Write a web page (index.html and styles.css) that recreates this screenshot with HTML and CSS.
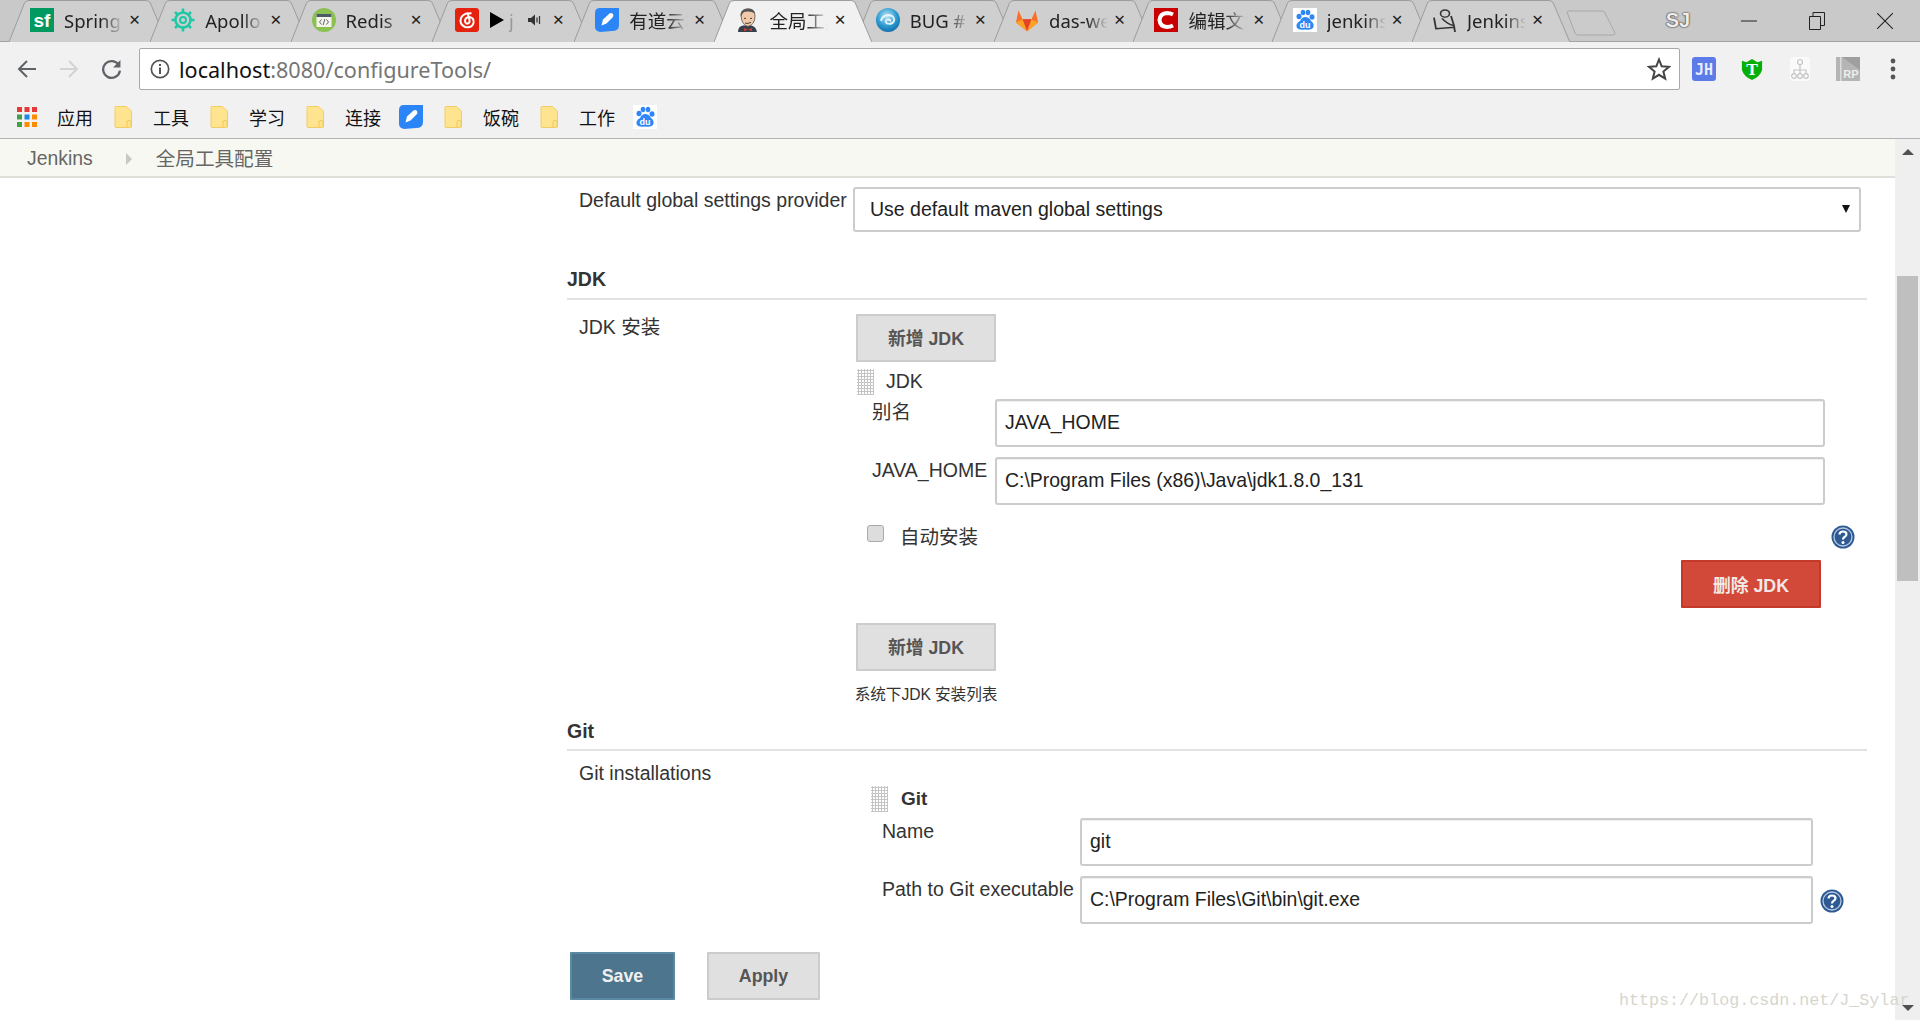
FILE: index.html
```html
<!DOCTYPE html>
<html lang="zh">
<head>
<meta charset="utf-8">
<title>全局工具配置 [Jenkins]</title>
<link rel="stylesheet" href="styles.css">
</head>
<body>
<svg class="defs" width="0" height="0" aria-hidden="true">
  <defs>
    <symbol id="tabshape" viewBox="0 0 160.5 42"><path d="M0 42 L15.5 3 Q16.7 .5 20 .5 L137 .5 Q140.5 .5 141.5 3 L158 42" /></symbol>
    <symbol id="folder" viewBox="0 0 18 22"><path d="M1 1.5 Q1 .5 2 .5 H12 L17.5 5 V20.5 Q17.5 21.5 16.5 21.5 H2 Q1 21.5 1 20.5Z" fill="#ffe48f" stroke="#f2cd62"/><path d="M13 21 V16 Q13 14.5 15 14.5 Q17 14.5 17 16 V21" fill="none" stroke="#eec65a"/></symbol>
    <symbol id="youdao" viewBox="0 0 24 24"><path d="M5 0 H24 V17 Q24 23 17 23 L5 24 Q0 23 0 19 V5 Q0 0 5 0Z" fill="#2b85f7"/><path d="M6.500 17.500 L8 11.500 L14.500 5.500 Q16.500 4.500 18 6 Q19 8 17.500 9.500 L11.500 15.500Z" fill="#fff"/></symbol>
    <symbol id="baidu" viewBox="0 0 24 24"><rect width="24" height="24" fill="#fff"/><g fill="#2f86f5"><ellipse cx="6" cy="8.500" rx="2.500" ry="2.800"/><ellipse cx="10" cy="4.500" rx="2.300" ry="2.800"/><ellipse cx="15" cy="4.500" rx="2.300" ry="2.800"/><ellipse cx="19" cy="9" rx="2.500" ry="2.800"/><path d="M12 9 Q16 9 18 13 Q22 16 20 20 Q18 22.500 12 21.500 Q6 22.500 4 20 Q2 16 7 13 Q9 9 12 9Z"/></g><text x="12" y="20" class="du">du</text></symbol>
    <symbol id="help" viewBox="0 0 24 24"><circle cx="12" cy="12" r="11.500" fill="#2e5a94"/><circle cx="12" cy="12" r="9" fill="none" stroke="#b6c8e0" stroke-width="1.300"/><path d="M8.500 9.500 Q8.700 6.500 12 6.500 Q15.500 6.500 15.500 9.300 Q15.500 11 13.500 12 Q12 12.800 12 14.500" fill="none" stroke="#fff" stroke-width="2.200"/><circle cx="12" cy="17.500" r="1.500" fill="#fff"/></symbol>
  </defs>
</svg>

<div class="tabstrip">
  <div class="tab"><svg class="tabbg"><use href="#tabshape"/></svg><div class="tabrow">
    <svg class="fav" viewBox="0 0 24 24"><rect width="24" height="24" fill="#009a61"/><text x="12" y="19" class="sf">sf</text></svg>
    <span class="tabtitle">Spring</span><span class="tabx">✕</span></div></div>
  <div class="tab"><svg class="tabbg"><use href="#tabshape"/></svg><div class="tabrow">
    <svg class="fav" viewBox="0 0 24 24"><circle cx="12" cy="12" r="7.500" fill="none" stroke="#1ec8a5" stroke-width="2.500"/><circle cx="12" cy="12" r="3" fill="none" stroke="#1ec8a5" stroke-width="2"/><path d="M12 .5V4M12 20V23.500M.5 12H4M20 12H23.500M4 4L6.500 6.500M17.500 17.500L20 20M20 4L17.500 6.500M6.500 17.500L4 20" stroke="#1ec8a5" stroke-width="2.500"/></svg>
    <span class="tabtitle">Apollo</span><span class="tabx">✕</span></div></div>
  <div class="tab"><svg class="tabbg"><use href="#tabshape"/></svg><div class="tabrow">
    <svg class="fav" viewBox="0 0 24 24"><circle cx="12" cy="12" r="12" fill="#8cc152"/><rect x="4.500" y="6" width="15" height="13" fill="#f4f4ee"/><rect x="4.500" y="6" width="15" height="3" fill="#4a5a66"/><path d="M9.500 11.500L7.500 14L9.500 16.500M14.500 11.500L16.500 14L14.500 16.500M12.800 11L11.200 17" fill="none" stroke="#555" stroke-width=".9"/></svg>
    <span class="tabtitle">Redis</span><span class="tabx">✕</span></div></div>
  <div class="tab audio"><svg class="tabbg"><use href="#tabshape"/></svg><div class="tabrow">
    <svg class="fav" viewBox="0 0 24 24"><rect width="24" height="24" rx="3" fill="#e5220d"/><path d="M13.500 5 Q8 6 6 10 Q4 16 10 19 Q17 20.500 18.500 15 Q19.500 10 14.500 9 Q10 9.500 10 13 Q10.500 16 13 15.500 Q15 15 14.500 12 L13 6.500 Q14 4.500 16.500 5.500" fill="none" stroke="#fff" stroke-width="2"/></svg>
    <span class="media"></span><span class="tabtitle short">j</span><svg class="speaker" viewBox="0 0 14 14"><path d="M1 5H4L8 1.500V12.500L4 9H1Z" fill="#333"/><path d="M10 4.500V9.500M12.500 3V11" stroke="#333" stroke-width="1.200"/></svg><span class="tabx media-x">✕</span></div></div>
  <div class="tab"><svg class="tabbg"><use href="#tabshape"/></svg><div class="tabrow">
    <svg class="fav" viewBox="0 0 24 24"><use href="#youdao"/></svg>
    <span class="tabtitle">有道云笔记</span><span class="tabx">✕</span></div></div>
  <div class="tab active"><svg class="tabbg"><use href="#tabshape"/></svg><div class="tabrow">
    <svg class="fav" viewBox="0 0 24 30" preserveAspectRatio="none"><path d="M3 30 Q3 23 8 22 H16 Q21 23 22 30Z" fill="#35404a"/><path d="M6 10 Q6 1 13 1 Q20 1 20 10 Q20 21 13 23 Q7 22 6 10Z" fill="#f1c9a8" stroke="#444" stroke-width=".8"/><path d="M6 11 Q4 3 12 1 Q19 0 20 7 Q15 3 9 5 Q7 7 6 11Z" fill="#555"/><path d="M9 13H11M15 13H17M10 19Q13 20 16 18" stroke="#333" stroke-width="1" fill="none"/><path d="M9 25L13 27L17 25V29L13 27L9 29Z" fill="#d33833"/></svg>
    <span class="tabtitle">全局工具配置</span><span class="tabx">✕</span></div></div>
  <div class="tab"><svg class="tabbg"><use href="#tabshape"/></svg><div class="tabrow">
    <svg class="fav" viewBox="0 0 24 24"><defs><radialGradient id="ball" cx=".45" cy=".35" r=".75"><stop offset="0" stop-color="#bfe6f5"/><stop offset=".55" stop-color="#2a9bd0"/><stop offset="1" stop-color="#0d5e9c"/></radialGradient></defs><circle cx="12" cy="12" r="12" fill="url(#ball)"/><path d="M5 13 Q6 7 13 7 Q19 8 18 13 Q16 17 11 15.500 Q8 13 12 11.500 Q15 11.500 14 13.500" fill="none" stroke="#e4f5fb" stroke-width="1.800"/></svg>
    <span class="tabtitle">BUG #</span><span class="tabx">✕</span></div></div>
  <div class="tab"><svg class="tabbg"><use href="#tabshape"/></svg><div class="tabrow">
    <svg class="fav" viewBox="0 0 24 30" preserveAspectRatio="none"><path d="M12 29L1 18L3.500 3L7.500 14H16.500L20.500 3L23 18Z" fill="#fc6d26"/><path d="M12 29L7.500 14H16.500Z" fill="#e24329"/><path d="M1 18L7.500 14L12 29Z" fill="#fca326"/><path d="M23 18L16.500 14L12 29Z" fill="#fca326"/></svg>
    <span class="tabtitle">das-web</span><span class="tabx">✕</span></div></div>
  <div class="tab"><svg class="tabbg"><use href="#tabshape"/></svg><div class="tabrow">
    <svg class="fav" viewBox="0 0 24 24"><rect width="24" height="24" fill="#c90000"/><path d="M19 6.500 Q16 5 13 5 Q6 5.500 5.500 12 Q6 18.500 13 19 Q16 19 19 17.500" fill="none" stroke="#fff" stroke-width="4"/></svg>
    <span class="tabtitle">编辑文章</span><span class="tabx">✕</span></div></div>
  <div class="tab"><svg class="tabbg"><use href="#tabshape"/></svg><div class="tabrow">
    <svg class="fav" viewBox="0 0 24 24"><use href="#baidu"/></svg>
    <span class="tabtitle">jenkins</span><span class="tabx">✕</span></div></div>
  <div class="tab"><svg class="tabbg"><use href="#tabshape"/></svg><div class="tabrow">
    <svg class="fav" viewBox="0 0 24 30" preserveAspectRatio="none"><circle cx="12" cy="7" r="4.500" fill="none" stroke="#333" stroke-width="1.600"/><path d="M1 12 L3 26 L22 24 M9 13 Q14 20 21 22 L22 30 M18 10 L21 22" fill="none" stroke="#333" stroke-width="1.800"/></svg>
    <span class="tabtitle">Jenkins</span><span class="tabx">✕</span></div></div>
  <svg class="newtab" viewBox="0 0 50 26"><path d="M1 2 Q1 1 3 1 H36 Q38 1 39 3 L49 23 Q49 25 47 25 H12 Q10 25 9 23Z" fill="#cbcbcb" stroke="#a8a8a8"/></svg>
  <div class="winctl">
    <span class="sj">SJ</span>
    <span class="wbtn"><svg viewBox="0 0 16 16" width="16" height="16"><path d="M0 8H16" stroke="#222"/></svg></span>
    <span class="wbtn"><svg viewBox="0 0 16 18" width="16" height="18"><path d="M.5 4.500H11.500V17.500H.5ZM4 4V.5H15.500V13.500H12" fill="none" stroke="#222"/></svg></span>
    <span class="wbtn"><svg viewBox="0 0 16 16" width="16" height="16"><path d="M0 0L16 16M16 0L0 16" stroke="#222" stroke-width="1.100"/></svg></span>
  </div>
</div>

<div class="toolbar">
  <span class="nav"><svg viewBox="0 0 20 20" width="20" height="20"><path d="M19 10H2M10 2L2 10L10 18" fill="none" stroke="#5f6368" stroke-width="2"/></svg></span>
  <span class="nav"><svg viewBox="0 0 20 20" width="20" height="20"><path d="M1 10H18M10 2L18 10L10 18" fill="none" stroke="#d3d3d3" stroke-width="2"/></svg></span>
  <span class="nav"><svg viewBox="0 0 20 20" width="21" height="21"><path d="M17 6 A8 8 0 1 0 18 11" fill="none" stroke="#5f6368" stroke-width="2.200"/><path d="M18.500 1V8H11.500Z" fill="#5f6368"/></svg></span>
  <div class="omnibox">
    <svg class="info" viewBox="0 0 20 20" width="20" height="20"><circle cx="10" cy="10" r="8.700" fill="none" stroke="#555" stroke-width="1.700"/><rect x="9" y="8.500" width="2" height="6.500" fill="#555"/><rect x="9" y="5" width="2" height="2" fill="#555"/></svg>
    <span class="url"><span class="host">localhost</span>:8080/configureTools/</span>
    <svg class="star" viewBox="0 0 24 24" width="24" height="24"><path d="M12 2.500L14.700 9.300L22 9.800L16.400 14.500L18.200 21.700L12 17.800L5.800 21.700L7.600 14.500L2 9.800L9.300 9.300Z" fill="none" stroke="#444" stroke-width="2"/></svg>
  </div>
  <span class="ext"><svg viewBox="0 0 24 24" width="24" height="24"><rect width="24" height="24" rx="3" fill="#5b7be8"/><text x="12" y="18" class="jh">JH</text></svg></span>
  <span class="ext"><svg viewBox="0 0 24 24" width="22" height="24"><path d="M1 3L6 4.500L12 1L18 4.500L23 3V13Q21 20 12 24Q3 20 1 13Z" fill="#08ae08"/><text x="12" y="18" class="tt">T</text></svg></span>
  <span class="ext"><svg viewBox="0 0 20 24" width="20" height="24"><rect width="20" height="24" rx="4" fill="#fafafa"/><g fill="none" stroke="#c4c4c4" stroke-width="1.200"><circle cx="10" cy="5" r="2.500"/><circle cx="4" cy="19" r="2.300"/><circle cx="10" cy="19" r="2.300"/><circle cx="16" cy="19" r="2.300"/><path d="M10 8V16.500M4 16.500V13H16V16.500"/></g></svg></span>
  <span class="ext"><svg viewBox="0 0 24 24" width="24" height="24"><rect width="24" height="24" fill="#b5b5b5"/><rect x="4" width="1.500" height="24" fill="#ddd"/><path d="M6 0L24 13V0Z" fill="#9f9f9f"/><text x="15" y="21" class="rp">RP</text></svg></span>
  <span class="ext dots"><svg viewBox="0 0 8 22" width="8" height="22"><circle cx="4" cy="3" r="2.400" fill="#555"/><circle cx="4" cy="11" r="2.400" fill="#555"/><circle cx="4" cy="19" r="2.400" fill="#555"/></svg></span>
</div>

<div class="bookmarks">
  <svg class="apps" viewBox="0 0 20 20" width="20" height="20"><g><rect width="5" height="5" fill="#e53935"/><rect x="7.500" width="5" height="5" fill="#e53935"/><rect x="15" width="5" height="5" fill="#e53935"/><rect y="7.500" width="5" height="5" fill="#43a047"/><rect x="7.500" y="7.500" width="5" height="5" fill="#1e88e5"/><rect x="15" y="7.500" width="5" height="5" fill="#fb8c00"/><rect y="15" width="5" height="5" fill="#43a047"/><rect x="7.500" y="15" width="5" height="5" fill="#fb8c00"/><rect x="15" y="15" width="5" height="5" fill="#fb8c00"/></g></svg>
  <span class="bm">应用</span>
  <svg class="bmicon"><use href="#folder"/></svg><span class="bm">工具</span>
  <svg class="bmicon"><use href="#folder"/></svg><span class="bm">学习</span>
  <svg class="bmicon"><use href="#folder"/></svg><span class="bm">连接</span>
  <svg class="bmfav" viewBox="0 0 24 24"><use href="#youdao"/></svg>
  <svg class="bmicon"><use href="#folder"/></svg><span class="bm">饭碗</span>
  <svg class="bmicon"><use href="#folder"/></svg><span class="bm">工作</span>
  <svg class="bmfav" viewBox="0 0 24 24"><use href="#baidu"/></svg>
</div>

<div class="viewport">
  <div class="pagecol">
    <nav class="crumbs"><span>Jenkins</span><span class="crumbarrow"></span><span class="crumbcn">全局工具配置</span></nav>
    <main class="form">
      <div class="row first">
        <label class="lbl">Default global settings provider</label>
        <div class="selwrap"><select class="sel"><option>Use default maven global settings</option></select></div>
      </div>

      <h2 class="sect">JDK</h2>
      <div class="row">
        <label class="lbl">JDK 安装</label>
        <div class="repeat">
          <button class="btn add">新增 JDK</button>
          <div class="itemhead"><span class="handle"></span><span class="itemname">JDK</span></div>
          <div class="fields jdkfields">
            <label>别名</label><input class="txt" value="JAVA_HOME">
            <label>JAVA_HOME</label><input class="txt" value="C:\Program Files (x86)\Java\jdk1.8.0_131">
          </div>
          <div class="checkrow">
            <input type="checkbox" class="chk"><span>自动安装</span>
            <svg class="helpicon"><use href="#help"/></svg>
          </div>
          <div class="delrow"><button class="btn del">删除 JDK</button></div>
          <button class="btn add second">新增 JDK</button>
          <div class="note">系统下JDK 安装列表</div>
        </div>
      </div>

      <h2 class="sect git">Git</h2>
      <div class="row gitrow">
        <label class="lbl">Git installations</label>
        <div class="repeat gitrepeat">
          <div class="itemhead githead"><span class="handle"></span><b>Git</b></div>
          <div class="fields gitfields">
            <label>Name</label><input class="txt" value="git"><span></span>
            <label>Path to Git executable</label><input class="txt" value="C:\Program Files\Git\bin\git.exe"><svg class="helpicon inline"><use href="#help"/></svg>
          </div>
        </div>
      </div>

      <div class="actions"><button class="btn save">Save</button><button class="btn apply">Apply</button></div>
    </main>
  </div>
  <aside class="scrollbar">
    <span class="arrow up"></span>
    <span class="thumb"></span>
    <span class="arrow down"></span>
  </aside>
</div>
<div class="watermark">https://blog.csdn.net/J_Sylar</div>
</body>
</html>
```

FILE: styles.css
```css
* { box-sizing: border-box; }
html, body { margin: 0; height: 1020px; overflow: hidden; background: #fff; }
body { position: relative; font-family: "Liberation Sans", "Noto Sans CJK SC", sans-serif; color: #333; }
.defs { position: absolute; }

/* browser chrome */
.tabstrip { display: flex; height: 42px; padding-left: 9px; background: #c9c9c9; border-bottom: 1px solid #a3a3a3; }
.tab { display: grid; flex: none; width: 160.3px; height: 42px; margin-right: -20px; position: relative; }
.tab:nth-child(2), .tab:nth-child(4) { margin-left: 1px; }
.tab:nth-child(5) { margin-left: 2px; }
.tab:nth-child(8), .tab:nth-child(9) { margin-left: -1px; }
.tab:nth-child(10) { margin-left: -2px; }
.tabbg { grid-area: 1 / 1; width: 160.3px; height: 42px; fill: #cfcfcf; stroke: #9c9c9c; }
.tab.active { z-index: 2; }
.tab.active .tabbg { fill: #f1f1f1; }
.tabrow { grid-area: 1 / 1; display: flex; align-items: center; height: 42px; padding: 0 0 2px 21px; z-index: 1; }
.tab.audio .tabrow { padding-left: 23px; }
.fav { flex: none; width: 24px; height: 24px; }
.tabtitle { width: 62px; margin-left: 10px; overflow: hidden; white-space: nowrap; font: 18.5px "Noto Sans", "Noto Sans CJK SC", sans-serif; color: #222;
  -webkit-mask-image: linear-gradient(90deg, #000 60%, transparent 95%); mask-image: linear-gradient(90deg, #000 60%, transparent 95%); }
.tabtitle.short { width: 8px; margin-left: 5px; color: #999; }
.tabx { width: 15px; margin-left: 1px; font: 700 14.500px "DejaVu Sans", sans-serif; color: #222; text-align: center; }
.media { width: 0; height: 0; margin-left: 11px; border-left: 14px solid #000; border-top: 8px solid transparent; border-bottom: 8px solid transparent; }
.speaker { width: 14px; height: 14px; margin-left: 10px; }
.media-x { margin-left: 10px; }
.sf { font: 700 19px "Liberation Sans", sans-serif; fill: #fff; text-anchor: middle; }
.du { font: 700 9px "Liberation Sans", sans-serif; fill: #fff; text-anchor: middle; }
.newtab { flex: none; width: 50px; height: 26px; margin: 10px 0 0 14px; }
.winctl { display: flex; margin-left: auto; padding-right: 1px; height: 41px; align-items: center; }
.sj { width: 40px; margin-right: 17px; text-align: center; font: 700 20px "Liberation Sans", sans-serif; color: #eee; text-shadow: 0 0 2px #222, 0 0 1px #222; }
.wbtn { display: flex; justify-content: center; align-items: center; width: 68px; height: 41px; }

.toolbar { display: flex; align-items: flex-start; height: 48px; padding: 6px 0 0 6px; background: #f1f1f1; }
.nav { display: flex; flex: none; justify-content: center; align-items: center; width: 42px; height: 42px; }
.omnibox { display: flex; flex: none; align-items: center; width: 1541px; height: 42px; margin-left: 7px; padding: 0 8px 0 10px; background: #fff; border: 1px solid #a9a9a9; border-radius: 2px; }
.info { flex: none; }
.url { flex: 1; margin-left: 9px; font: 21.6px "Noto Sans", sans-serif; color: #757575; }
.host { color: #111; }
.ext { display: flex; flex: none; justify-content: center; align-items: center; width: 48px; height: 42px; }
.ext.dots { padding-right: 6px; }
.jh { font: 700 15px "DejaVu Sans Mono", monospace; fill: #e8ecff; text-anchor: middle; }
.tt { font: 700 19px "Liberation Serif", serif; fill: #fff; text-anchor: middle; }
.rp { font: 700 11px "Liberation Sans", sans-serif; fill: #eee; text-anchor: middle; }

.bookmarks { display: flex; align-items: center; gap: 21px; height: 49px; padding: 5px 0 0 17px; background: #f1f1f1; border-bottom: 1px solid #b3b3b3; }
.apps { flex: none; margin-right: -1px; }
.bm { font: 18px "Noto Sans CJK SC", sans-serif; color: #111; }
.bmicon { flex: none; width: 18px; height: 22px; }
.bmfav { flex: none; width: 24px; height: 24px; margin-left: -3px; }

/* page */
.viewport { display: flex; height: 881px; }
.pagecol { width: 1895px; flex: none; }
.crumbs { display: flex; align-items: center; height: 39px; padding: 2px 0 0 27px; background: #f6f8f1; border-bottom: 2px solid #dddfd8; color: #666; font-size: 19.4px; }
.crumbarrow { width: 0; height: 0; margin: 0 24px 0 33px; border-left: 6px solid #c6c8c2; border-top: 6px solid transparent; border-bottom: 6px solid transparent; }
.crumbcn { font-size: 19.6px; margin-bottom: 2px; }

.form { padding: 9px 28px 0 567px; font-size: 19.5px; line-height: 26px; }
.row { display: grid; grid-template-columns: 286px 1fr; }
.lbl { padding-left: 12px; }
.first { padding-right: 6px; }
.selwrap { position: relative; }
.selwrap::after { content: ""; position: absolute; right: 11px; top: 18px; border-left: 4.500px solid transparent; border-right: 4.500px solid transparent; border-top: 8px solid #111; }
.sel { display: block; width: 100%; height: 45px; padding: 0 0 1px 15px; font: 19.5px "Liberation Sans", sans-serif; color: #222; background: #fff; border: 2px solid #ccc; border-radius: 3px; appearance: none; }
.sect { margin: 30px 0 0; height: 38px; font-size: 19.5px; font-weight: 700; line-height: 34px; color: #333; border-bottom: 2px solid #e2e2e2; }
.sect.git { margin-top: 6px; height: 37px; }
.sect + .row { padding-top: 14px; }
.sect.git + .row { padding-top: 9px; }

.btn { display: block; height: 48px; padding: 0; font: 700 17.800px "Liberation Sans", "Noto Sans CJK SC", sans-serif; cursor: pointer; border: 2px solid #ccc; background: #e0e0e0; color: #555; border-radius: 1px; }
.add { width: 140px; margin-left: 3px; padding-bottom: 3px; }
.add.second { margin-top: 15px; }
.itemhead { display: flex; align-items: center; height: 26px; margin: 7px 0 0 4px; gap: 12px; }
.itemname { padding-bottom: 2px; }
.handle { flex: none; width: 17px; height: 26px; background-image: radial-gradient(circle, #c4c4c4 1px, transparent 1.2px); background-size: 3px 3px; }
.fields { display: grid; align-items: start; margin-top: 4px; row-gap: 10px; }
.jdkfields { grid-template-columns: 123px 830px; padding-left: 19px; }
.txt { display: block; width: 100%; height: 48px; padding: 0 8px 2px; font: 19.45px "Liberation Sans", sans-serif; color: #222; background: #fff; border: 2px solid #ccc; border-radius: 3px; box-shadow: inset 0 1px 1px #eee; outline: 0; }
.checkrow { display: flex; align-items: center; height: 26px; margin-top: 19px; padding-left: 14px; }
.chk { width: 17px; height: 17px; margin: -8px 16px 0 0; appearance: none; background: #ddd; border: 1px solid #aaa; border-radius: 3px; }
.helpicon { width: 24px; height: 24px; margin-left: auto; margin-right: 12px; }
.delrow { display: flex; justify-content: flex-end; margin-top: 10px; padding-right: 46px; }
.del { width: 140px; color: #f1e8e6; background: #d24939; border-color: #c4392b; padding-bottom: 1px; }
.note { width: 146px; margin-top: 11px; font-size: 15.700px; line-height: 26px; white-space: nowrap; text-align: center; letter-spacing: -.1px; }

.githead { margin: 26px 0 0 18px; gap: 13px; }
.githead b { font-size: 19px; }
.gitfields { grid-template-columns: 198px 733px 30px; padding-left: 29px; margin-top: 6px; }
.helpicon.inline { margin: 13px 0 0 7px; }

.actions { display: flex; gap: 32px; margin: 28px 0 0 3px; }
.save { width: 105px; color: #f0f0f0; background: #4d758d; border-color: #5a89a4; }
.apply { width: 113px; }

.scrollbar { display: flex; flex: none; flex-direction: column; align-items: center; width: 25px; background: #efefef; }
.arrow { width: 0; height: 0; border-left: 6px solid transparent; border-right: 6px solid transparent; }
.arrow.up { margin-top: 10px; border-bottom: 6px solid #505050; }
.arrow.down { margin-top: auto; margin-bottom: 9px; border-top: 6px solid #505050; }
.thumb { width: 21px; height: 305px; margin-top: 121px; background: #bfbfbf; }

.watermark { position: absolute; left: 1619px; top: 989px; font: 16.700px/24px "Liberation Mono", monospace; color: #d6d6ce; white-space: nowrap; }
```
